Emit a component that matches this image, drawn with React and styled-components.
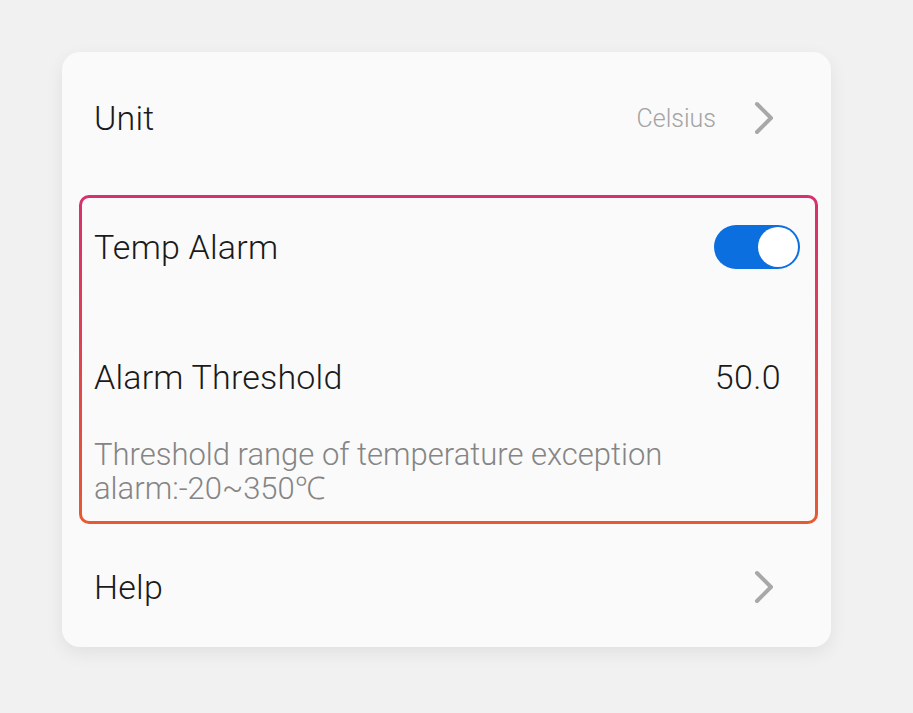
import React from "react";
import styled, { createGlobalStyle } from "styled-components";

const Global = createGlobalStyle`
  html, body { margin: 0; padding: 0; background: #f1f1f1; }
  body { font-family: Roboto, "Noto Sans", "Liberation Sans", sans-serif; }
`;

const Page = styled.div`
  width: 913px;
  height: 713px;
  padding: 52px 0 0 62px;
  box-sizing: border-box;
`;

const Card = styled.div`
  width: 769px;
  height: 595px;
  box-sizing: border-box;
  background: #fafafa;
  border-radius: 18px;
  box-shadow: 0 6px 18px rgba(0, 0, 0, 0.07);
  padding: 0 13px 0 17px;
  display: flex;
  flex-direction: column;
`;

const Row = styled.div`
  display: flex;
  align-items: center;
  justify-content: space-between;
  height: ${(p) => p.$h}px;
  margin-top: ${(p) => p.$mt || 0}px;
  padding: 0 ${(p) => p.$pr ?? 15}px 0 ${(p) => p.$pl ?? 15}px;
`;

const Label = styled.span`
  font-size: 34px;
  font-weight: 300;
  letter-spacing: 0.2px;
  color: #1a1a1a;
`;

const Value = styled.span`
  font-size: 34px;
  font-weight: 300;
  letter-spacing: 0.4px;
  color: #1a1a1a;
`;

const Trailing = styled.div`
  display: flex;
  align-items: center;
  gap: 38px;
`;

const SubValue = styled.span`
  font-size: 25px;
  font-weight: 300;
  color: #a3a3a3;
`;

const Highlight = styled.div`
  margin-top: 11px;
  padding: 3px;
  border-radius: 10px;
  background: linear-gradient(180deg, #d6306f 0%, #e65a32 100%);
`;

const HighlightInner = styled.div`
  background: #fafafa;
  border-radius: 7px;
  padding-bottom: 15px;
`;

const Desc = styled.p`
  margin: 2px 0 0;
  padding: 0 34px 0 12px;
  font-size: 31px;
  line-height: 34px;
  font-weight: 300;
  color: #858585;
`;

const Switch = styled.div`
  width: 86px;
  height: 44px;
  border-radius: 22px;
  background: #0b6fe0;
  box-sizing: border-box;
  padding: 2px;
  display: flex;
  justify-content: flex-end;
`;

const Knob = styled.div`
  width: 40px;
  height: 40px;
  border-radius: 50%;
  background: #ffffff;
`;

const Chevron = () => (
  <svg width="20" height="34" viewBox="0 0 20 34" fill="none">
    <polyline
      points="3,3 17,17 3,31"
      stroke="#a8a8a8"
      strokeWidth="4"
      strokeLinecap="round"
      strokeLinejoin="round"
    />
  </svg>
);

export default function App() {
  return (
    <>
      <Global />
      <Page>
        <Card>
          <Row $h={132} $pr={44}>
            <Label>Unit</Label>
            <Trailing>
              <SubValue>Celsius</SubValue>
              <Chevron />
            </Trailing>
          </Row>
          <Highlight>
            <HighlightInner>
              <Row $h={98} $pr={15} $pl={12}>
                <Label>Temp Alarm</Label>
                <Switch>
                  <Knob />
                </Switch>
              </Row>
              <Row $h={118} $mt={22} $pr={34} $pl={12}>
                <Label>Alarm Threshold</Label>
                <Value>50.0</Value>
              </Row>
              <Desc>Threshold range of temperature exception alarm:-20~350℃</Desc>
            </HighlightInner>
          </Highlight>
          <Row $h={120} $mt={3} $pr={44}>
            <Label>Help</Label>
            <Chevron />
          </Row>
        </Card>
      </Page>
    </>
  );
}
